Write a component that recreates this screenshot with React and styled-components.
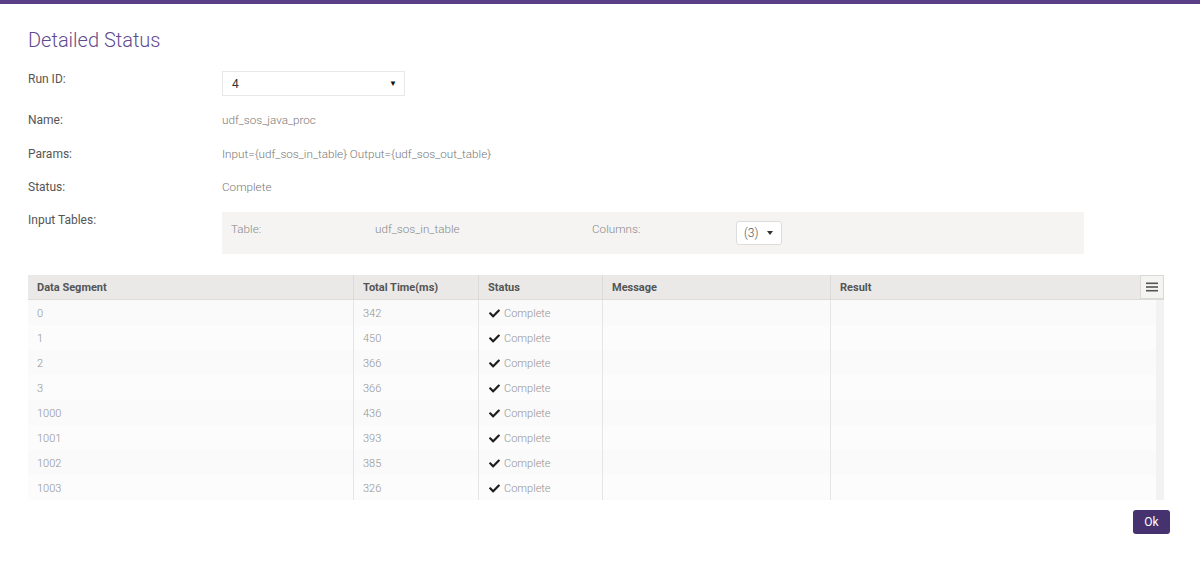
import React from 'react';
import styled, { createGlobalStyle } from 'styled-components';
import { FaCheck } from 'react-icons/fa';

const GlobalStyle = createGlobalStyle`
  html, body {
    margin: 0;
    padding: 0;
    background: #fff;
    font-family: Roboto, "Liberation Sans", Arial, sans-serif;
  }
`;

const Page = styled.div`
  width: 1200px;
  height: 563px;
  border-top: 4px solid #5a3f86;
  box-sizing: border-box;
  padding: 0 30px 0 28px;
  overflow: hidden;
`;

const Title = styled.h1`
  margin: 0;
  padding-top: 24px;
  height: 47px;
  box-sizing: border-box;
  font-size: 20px;
  line-height: 24px;
  font-weight: 300;
  color: #624a8f;
`;

const Form = styled.div`
  display: flex;
  flex-direction: column;
  gap: 16px;
  padding-top: 20px;
`;

const Row = styled.div`
  display: grid;
  grid-template-columns: 194px 1fr;
  align-items: start;
  margin-bottom: ${p => p.$mb || '0'};
`;

const Label = styled.div`
  font-size: 12px;
  line-height: 16px;
  color: #555;
`;

const Value = styled.div`
  font-size: 11.7px;
  line-height: 16px;
  font-weight: 300;
  color: #777;
`;

const Select = styled.div`
  width: 183px;
  height: 25px;
  box-sizing: border-box;
  border: 1px solid #e8e8e8;
  display: flex;
  align-items: center;
  justify-content: space-between;
  padding: 0 7px 0 9px;
  font-size: 12px;
  color: #333;
  .arrow {
    font-size: 8px;
    color: #111;
  }
`;

const Panel = styled.div`
  width: 862px;
  height: 42px;
  box-sizing: border-box;
  background: #f5f4f2;
  padding: 9px;
  display: grid;
  grid-template-columns: 144px 217px 144px auto;
  align-items: start;
`;

const PanelText = styled.div`
  font-size: 11.7px;
  line-height: 16px;
  font-weight: 300;
  color: #888;
`;

const DropButton = styled.div`
  width: 46px;
  height: 24px;
  box-sizing: border-box;
  background: #fff;
  border: 1px solid #dcdcdc;
  border-radius: 3px;
  display: flex;
  align-items: center;
  gap: 9px;
  padding-left: 7px;
  font-size: 12px;
  font-weight: 300;
  color: #555;
`;

const Caret = styled.span`
  width: 0;
  height: 0;
  border-left: 3.5px solid transparent;
  border-right: 3.5px solid transparent;
  border-top: 4px solid #333;
`;

const Grid = styled.div`
  margin-top: 21px;
  width: 1136px;
`;

const HeadRow = styled.div`
  display: grid;
  grid-template-columns: 325px 125px 124px 228px 310px 24px;
  height: 25px;
  background: #eae9e7;
  border-bottom: 1px solid #dedcd8;
  box-sizing: border-box;
`;

const HeadCell = styled.div`
  display: flex;
  align-items: center;
  padding-left: 9px;
  font-size: 11px;
  font-weight: 700;
  color: #555;
  border-left: ${p => (p.$first ? 'none' : '1px solid #dcdad6')};
`;

const MenuButton = styled.div`
  display: flex;
  align-items: center;
  justify-content: center;
  background: #f4f4f3;
  border: 1px solid #dcdad6;
  box-sizing: border-box;
`;

const Body = styled.div`
  display: flex;
  background: #f2f2f2;
`;

const Rows = styled.div`
  width: 1128px;
`;

const BodyRow = styled.div`
  display: grid;
  grid-template-columns: 325px 125px 124px 228px 326px;
  height: 25px;
  background: ${p => (p.$odd ? '#fcfcfc' : '#fafafa')};
`;

const Cell = styled.div`
  display: flex;
  align-items: center;
  gap: 4px;
  padding-left: 9px;
  padding-top: 1px;
  font-size: 11px;
  font-weight: 300;
  color: #929292;
  border-left: ${p => (p.$first ? 'none' : '1px solid #e6e5e2')};
  svg {
    color: #1e1e1e;
    margin-left: 1px;
  }
`;

const Footer = styled.div`
  display: flex;
  justify-content: flex-end;
  padding-top: 10px;
`;

const OkButton = styled.button`
  width: 37px;
  height: 24px;
  border: none;
  border-radius: 3px;
  background: #46326e;
  color: #fff;
  font-family: Roboto, "Liberation Sans", Arial, sans-serif;
  font-size: 12px;
  padding: 0;
`;

const data = [
  ['0', '342'],
  ['1', '450'],
  ['2', '366'],
  ['3', '366'],
  ['1000', '436'],
  ['1001', '393'],
  ['1002', '385'],
  ['1003', '326'],
];

const MenuIcon = () => (
  <svg width="12" height="10" viewBox="0 0 12 10">
    <rect x="0" y="0.5" width="12" height="1.6" fill="#555" />
    <rect x="0" y="4.2" width="12" height="1.6" fill="#555" />
    <rect x="0" y="7.9" width="12" height="1.6" fill="#555" />
  </svg>
);

export default function App() {
  return (
    <>
      <GlobalStyle />
      <Page>
        <Title>Detailed Status</Title>
        <Form>
          <Row>
            <Label>Run ID:</Label>
            <Select>
              <span>4</span>
              <span className="arrow">▼</span>
            </Select>
          </Row>
          <Row $mb="2px">
            <Label>Name:</Label>
            <Value>udf_sos_java_proc</Value>
          </Row>
          <Row $mb="1px">
            <Label>Params:</Label>
            <Value>Input={'{'}udf_sos_in_table{'}'} Output={'{'}udf_sos_out_table{'}'}</Value>
          </Row>
          <Row $mb="1px">
            <Label>Status:</Label>
            <Value>Complete</Value>
          </Row>
          <Row>
            <Label>Input Tables:</Label>
            <Panel>
              <PanelText>Table:</PanelText>
              <PanelText>udf_sos_in_table</PanelText>
              <PanelText>Columns:</PanelText>
              <DropButton>
                <span>(3)</span>
                <Caret />
              </DropButton>
            </Panel>
          </Row>
        </Form>
        <Grid>
          <HeadRow>
            <HeadCell $first>Data Segment</HeadCell>
            <HeadCell>Total Time(ms)</HeadCell>
            <HeadCell>Status</HeadCell>
            <HeadCell>Message</HeadCell>
            <HeadCell>Result</HeadCell>
            <MenuButton>
              <MenuIcon />
            </MenuButton>
          </HeadRow>
          <Body>
            <Rows>
              {data.map(([seg, time], i) => (
                <BodyRow key={seg} $odd={i % 2 === 1}>
                  <Cell $first>{seg}</Cell>
                  <Cell>{time}</Cell>
                  <Cell>
                    <FaCheck size={11} />Complete
                  </Cell>
                  <Cell />
                  <Cell />
                </BodyRow>
              ))}
            </Rows>
          </Body>
        </Grid>
        <Footer>
          <OkButton>Ok</OkButton>
        </Footer>
      </Page>
    </>
  );
}
